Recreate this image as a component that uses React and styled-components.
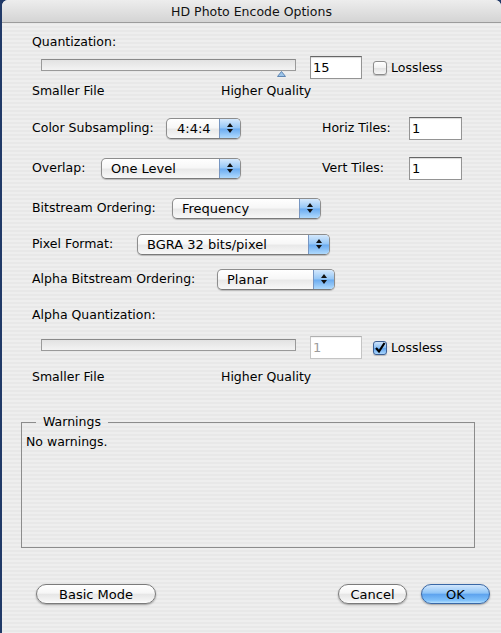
import React from 'react'
import styled, { createGlobalStyle } from 'styled-components'

const GlobalStyle = createGlobalStyle`
  html, body {
    margin: 0;
    padding: 0;
    background: #213a68;
  }
  body {
    font-family: "DejaVu Sans", "Liberation Sans", sans-serif;
    font-size: 12.5px;
    color: #000;
  }
`

const Window = styled.div`
  margin-left: 2px;
  width: 499px;
  height: 633px;
  border-radius: 6px 6px 0 0;
  overflow: hidden;
  background: repeating-linear-gradient(to bottom, #eeeeee 0 2px, #e8e8e8 2px 4px);
  display: flex;
  flex-direction: column;
`

const TitleBar = styled.div`
  height: 22px;
  flex-shrink: 0;
  border-bottom: 1px solid #9c9c9c;
  background: linear-gradient(#ededed, #d4d4d4);
  display: flex;
  align-items: center;
  justify-content: center;
  font-size: 12.5px;
  color: #111;
`

const Content = styled.div`
  padding-left: 30px;
  display: flex;
  flex-direction: column;
`

const Row = styled.div`
  display: flex;
  align-items: center;
  height: ${p => p.$h || 16}px;
  margin-top: ${p => p.$mt || 0}px;
`

const Label = styled.div`
  line-height: 16px;
  width: ${p => (p.$w ? `${p.$w}px` : 'auto')};
  margin-left: ${p => p.$ml || 0}px;
  flex-shrink: 0;
  white-space: nowrap;
`

const SliderWrap = styled.div`
  position: relative;
  margin-left: 9px;
  width: 255px;
  height: 23px;
  padding-top: 3px;
  box-sizing: border-box;
`

const Track = styled.div`
  height: 12px;
  box-sizing: border-box;
  border: 1px solid #9a9a9a;
  border-top-color: #8a8a8a;
  background: linear-gradient(#e2e2e2, #f3f3f3);
`

const Thumb = styled.svg`
  position: absolute;
  left: 236px;
  top: 15px;
`

const Field = styled.div`
  width: ${p => p.$w || 52}px;
  height: 23px;
  margin-left: ${p => p.$ml || 0}px;
  box-sizing: border-box;
  border: 1px solid ${p => (p.$disabled ? '#c4c4c4' : '#949494')};
  border-top-color: ${p => (p.$disabled ? '#b0b0b0' : '#666')};
  background: #fff;
  box-shadow: inset 0 1px 1px rgba(0, 0, 0, ${p => (p.$disabled ? 0.05 : 0.15)});
  padding: 2px 0 0 2px;
  font-size: 13px;
  line-height: 17px;
  color: ${p => (p.$disabled ? '#9c9c9c' : '#000')};
`

const CheckRow = styled.div`
  display: flex;
  align-items: center;
  margin-left: 11px;
  gap: 4px;
`

const Box = styled.div`
  width: 14px;
  height: 14px;
  box-sizing: border-box;
  border-radius: 3px;
  border: 1px solid ${p => (p.$checked ? '#3d5f93' : '#8c8c8c')};
  background: ${p =>
    p.$checked
      ? 'linear-gradient(#cfe4fb, #86bdf3 50%, #5fa2ec 51%, #a9d5fc)'
      : 'linear-gradient(#ffffff, #f1f1f1 50%, #e2e2e2 51%, #f7f7f7)'};
  box-shadow: 0 1px 1px rgba(0, 0, 0, 0.2);
  display: flex;
  align-items: center;
  justify-content: center;
  overflow: visible;
`

const Scale = styled.div`
  display: grid;
  grid-template-columns: 189px auto;
  line-height: 16px;
  margin-top: ${p => p.$mt || 0}px;
`

const Popup = styled.div`
  width: ${p => p.$w}px;
  height: 21px;
  box-sizing: border-box;
  border: 1px solid #8d8d8d;
  border-bottom-color: #7a7a7a;
  border-radius: 5px;
  background: linear-gradient(#ffffff, #f7f7f7 45%, #e9e9e9 55%, #f8f8f8);
  box-shadow: 0 1px 1px rgba(0, 0, 0, 0.2);
  display: flex;
  overflow: hidden;
  flex-shrink: 0;
`

const PopupText = styled.div`
  flex: 1;
  padding-left: ${p => p.$pl || 9}px;
  display: flex;
  align-items: center;
  font-size: 13px;
  white-space: nowrap;
`

const PopupArrows = styled.div`
  width: 20px;
  border-left: 1px solid #7796c2;
  background: linear-gradient(#d4e8fc, #94c6f6 48%, #6aabf0 52%, #b0dafd);
  display: flex;
  flex-direction: column;
  align-items: center;
  justify-content: center;
  gap: 2px;
`

const Warnings = styled.fieldset`
  margin: 29px 0 0 -11px;
  width: 454px;
  height: 134px;
  box-sizing: border-box;
  border: 1px solid #8c8c8c;
  padding: 0 4px;
  min-width: 0;
`

const Legend = styled.legend`
  margin-left: 10px;
  padding: 0 7px;
  line-height: 16px;
`

const Message = styled.div`
  margin-top: 4px;
  margin-left: -4px;
  padding-left: 4px;
  line-height: 16px;
`

const Footer = styled.div`
  display: flex;
  align-items: center;
  padding: 0 10px 0 34px;
  margin-top: 36px;
`

const Button = styled.div`
  width: ${p => p.$w}px;
  height: 20px;
  box-sizing: border-box;
  border-radius: 10px;
  border: 1px solid ${p => (p.$primary ? '#3a68a6' : '#7b7b7b')};
  background: ${p =>
    p.$primary
      ? 'linear-gradient(#d2e7fd, #8ec4f7 45%, #5ea3ee 52%, #7fc0fa 85%, #b8e2ff)'
      : 'linear-gradient(#ffffff, #f6f6f6 45%, #e6e6e6 52%, #f3f3f3 85%, #ffffff)'};
  box-shadow: 0 1px 2px rgba(0, 0, 0, 0.35);
  display: flex;
  align-items: center;
  justify-content: center;
  font-size: 13px;
  margin-left: ${p => p.$ml || 0}px;
`

const Arrows = () => (
  <PopupArrows>
    <svg width="6" height="4" viewBox="0 0 6 4"><path d="M3 0 L6 4 L0 4 Z" fill="#111" /></svg>
    <svg width="6" height="4" viewBox="0 0 6 4"><path d="M0 0 L6 0 L3 4 Z" fill="#111" /></svg>
  </PopupArrows>
)

const Select = ({ w, value, pl }) => (
  <Popup $w={w}>
    <PopupText $pl={pl}>{value}</PopupText>
    <Arrows />
  </Popup>
)

const Check = ({ checked }) => (
  <Box $checked={checked}>
    {checked && (
      <svg width="12" height="12" viewBox="0 0 12 12">
        <path d="M2 6 L5 9.5 L10.5 1" fill="none" stroke="#000" strokeWidth="2.2" />
      </svg>
    )}
  </Box>
)

const Slider = ({ value, disabled, checked }) => (
  <Row $h={23} $mt={disabled ? 13 : 6}>
    <SliderWrap>
      <Track />
      {!disabled && (
        <Thumb width="9" height="6" viewBox="0 0 9 6">
          <path d="M4.5 0.5 L8.5 5.5 L0.5 5.5 Z" fill="#9cc4e8" stroke="#5f86b3" strokeWidth="1" />
        </Thumb>
      )}
    </SliderWrap>
    <Field $ml={14} $disabled={disabled}>{value}</Field>
    <CheckRow>
      <Check checked={checked} />
      <Label>Lossless</Label>
    </CheckRow>
  </Row>
)

export default function App() {
  return (
    <>
      <GlobalStyle />
      <Window>
        <TitleBar>HD Photo Encode Options</TitleBar>
        <Content>
          <Row $mt={11}><Label>Quantization:</Label></Row>
          <Slider value="15" />
          <Scale $mt={4}><span>Smaller File</span><span>Higher Quality</span></Scale>

          <Row $h={24} $mt={17}>
            <Label $w={134}>Color Subsampling:</Label>
            <Select w={75} value="4:4:4" pl={10} />
            <Label $w={87} $ml={81}>Horiz Tiles:</Label>
            <Field $w={53}>1</Field>
          </Row>

          <Row $h={24} $mt={16}>
            <Label $w={69}>Overlap:</Label>
            <Select w={140} value="One Level" />
            <Label $w={87} $ml={81}>Vert Tiles:</Label>
            <Field $w={53}>1</Field>
          </Row>

          <Row $h={22} $mt={17}>
            <Label $w={140}>Bitstream Ordering:</Label>
            <Select w={149} value="Frequency" />
          </Row>

          <Row $h={22} $mt={14}>
            <Label $w={105}>Pixel Format:</Label>
            <Select w={193} value="BGRA 32 bits/pixel" />
          </Row>

          <Row $h={22} $mt={13}>
            <Label $w={185}>Alpha Bitstream Ordering:</Label>
            <Select w={118} value="Planar" />
          </Row>

          <Row $mt={17}><Label>Alpha Quantization:</Label></Row>
          <Slider value="1" disabled checked />
          <Scale $mt={10}><span>Smaller File</span><span>Higher Quality</span></Scale>

          <Warnings>
            <Legend>Warnings</Legend>
            <Message>No warnings.</Message>
          </Warnings>
        </Content>
        <Footer>
          <Button $w={120}>Basic Mode</Button>
          <Button $w={69} $ml={182}>Cancel</Button>
          <Button $w={69} $ml={14} $primary>OK</Button>
        </Footer>
      </Window>
    </>
  )
}
